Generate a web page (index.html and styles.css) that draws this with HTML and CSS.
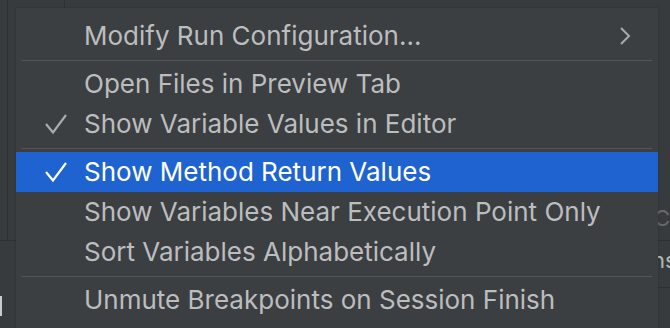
FILE: index.html
```html
<!DOCTYPE html>
<html>
<head>
<meta charset="utf-8">
<link rel="stylesheet" href="styles.css">
</head>
<body>
<div class="ide">
  <div class="bg-topline"></div>
  <div class="bg-leftline"></div>
  <div class="bg-lefthline"></div>
  <div class="bg-leftbar"></div>
  <div class="bg-rhline1"></div>
  <div class="bg-rhline2"></div>
  <div class="bg-rtext1">C</div>
  <div class="bg-rtext2">ns</div>

  <div class="menu">
    <div class="item">
      <span class="check"></span>
      <span class="label">Modify Run Configuration...</span>
      <svg class="chev" width="14" height="20" viewBox="0 0 14 20"><path d="M3 2 L11 10 L3 18" fill="none" stroke="#a9abad" stroke-width="2"/></svg>
    </div>
    <div class="sep"></div>
    <div class="item">
      <span class="check"></span>
      <span class="label">Open Files in Preview Tab</span>
    </div>
    <div class="item">
      <svg class="check" width="22" height="22" viewBox="0 0 22 22"><path d="M1 11 L8 19.5 L21 2" fill="none" stroke="#a9abad" stroke-width="2.2"/></svg>
      <span class="label">Show Variable Values in Editor</span>
    </div>
    <div class="sep"></div>
    <div class="item selected">
      <svg class="check" width="22" height="22" viewBox="0 0 22 22"><path d="M1 11 L8 19.5 L21 2" fill="none" stroke="#ffffff" stroke-width="2.2"/></svg>
      <span class="label">Show Method Return Values</span>
    </div>
    <div class="item">
      <span class="check"></span>
      <span class="label">Show Variables Near Execution Point Only</span>
    </div>
    <div class="item">
      <span class="check"></span>
      <span class="label">Sort Variables Alphabetically</span>
    </div>
    <div class="sep"></div>
    <div class="item">
      <span class="check"></span>
      <span class="label">Unmute Breakpoints on Session Finish</span>
    </div>
  </div>
</div>
</body>
</html>
```

FILE: styles.css
```css
html, body {
  margin: 0;
  padding: 0;
}
body {
  width: 670px;
  height: 328px;
  overflow: hidden;
  background: #383b3d;
  font-family: Inter, "Noto Sans", sans-serif;
}
.ide {
  position: relative;
  width: 670px;
  height: 328px;
  overflow: hidden;
}
.bg-topline {
  position: absolute;
  left: 64px; top: 0;
  width: 1px; height: 8px;
  background: #2e3032;
}
.bg-leftline {
  position: absolute;
  left: 7px; top: 0;
  width: 1px; height: 240px;
  background: #2e3032;
}
.bg-lefthline {
  position: absolute;
  left: 0; top: 240px;
  width: 16px; height: 1px;
  background: #2e3032;
}
.bg-leftbar {
  position: absolute;
  left: 0; top: 296px;
  width: 2px; height: 20px;
  background: #c9cbcd;
}
.bg-rhline1 {
  position: absolute;
  left: 658px; top: 240px;
  width: 12px; height: 1px;
  background: #2e3032;
}
.bg-rhline2 {
  position: absolute;
  left: 658px; top: 287px;
  width: 12px; height: 1px;
  background: #2e3032;
}
.bg-rtext1, .bg-rtext2 {
  position: absolute;
  font-size: 22px;
  line-height: 24px;
}
.bg-rtext1 { left: 654px; top: 206px; color: #66686a; }
.bg-rtext2 { left: 652px; top: 248px; color: #b4b6b8; }

.menu {
  position: absolute;
  left: 16px;
  top: 8px;
  width: 642px;
  height: 330px;
  background: #3c3f41;
  padding-top: 8px;
  box-sizing: border-box;
  box-shadow: 0 0 2px rgba(0,0,0,0.25);
}
.item {
  height: 40px;
  display: flex;
  align-items: center;
  color: #bbbdbf;
  font-size: 26px;
  line-height: 40px;
}
.item.selected {
  background: #1f63d1;
  color: #ffffff;
}
.check {
  width: 22px;
  height: 22px;
  margin-left: 29px;
  margin-right: 17px;
  flex: none;
  display: block;
}
.label {
  flex: 1;
  white-space: nowrap;
}
.chev {
  margin-right: 26px;
  flex: none;
}
.sep {
  height: 8px;
  display: flex;
  align-items: center;
  padding: 0 6px;
}
.sep::before {
  content: "";
  display: block;
  width: 100%;
  height: 1px;
  background: #535658;
  margin-top: 1px;
}
```
